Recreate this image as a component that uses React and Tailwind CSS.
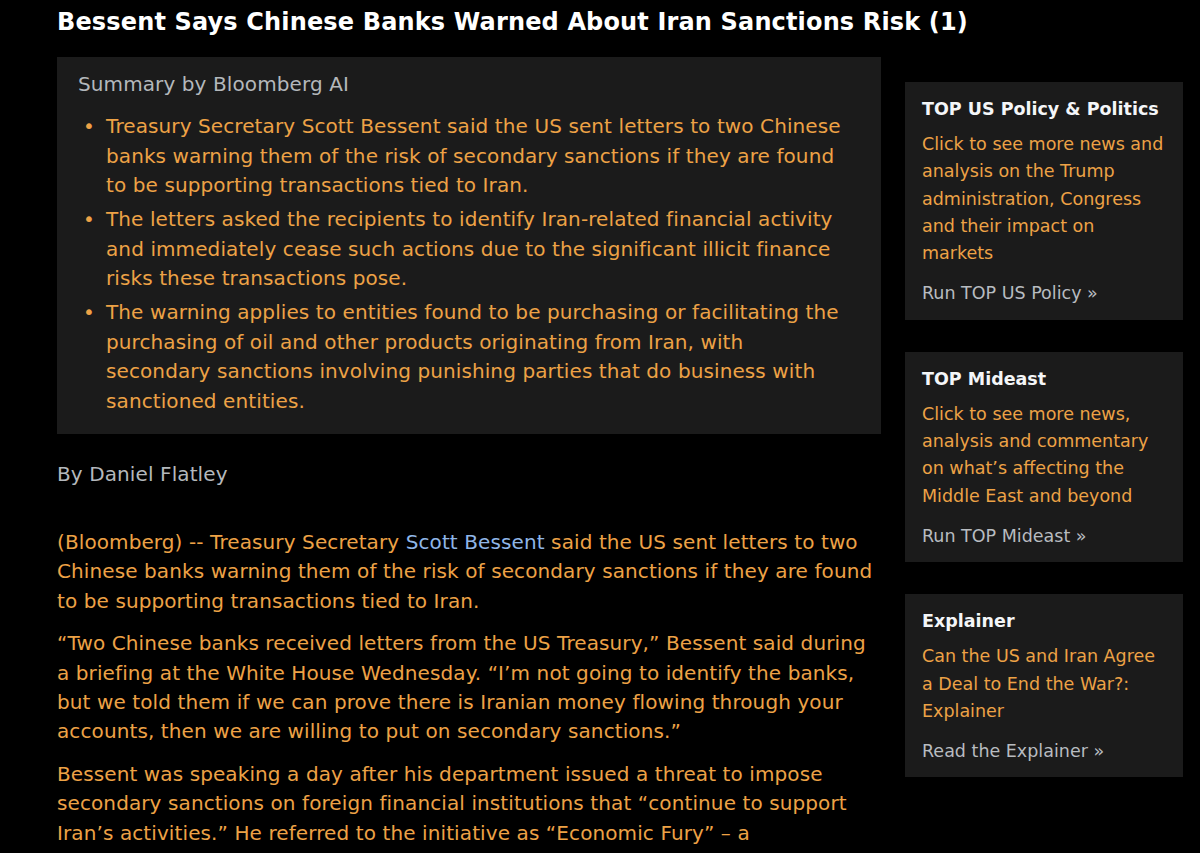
import React from 'react';

const body = "[font-family:'DejaVu_Sans','Verdana',sans-serif]";

const summary = [
  'Treasury Secretary Scott Bessent said the US sent letters to two Chinese banks warning them of the risk of secondary sanctions if they are found to be supporting transactions tied to Iran.',
  'The letters asked the recipients to identify Iran-related financial activity and immediately cease such actions due to the significant illicit finance risks these transactions pose.',
  'The warning applies to entities found to be purchasing or facilitating the purchasing of oil and other products originating from Iran, with secondary sanctions involving punishing parties that do business with sanctioned entities.',
];

const promos = [
  {
    title: 'TOP US Policy & Politics',
    text: 'Click to see more news and analysis on the Trump administration, Congress and their impact on markets',
    link: 'Run TOP US Policy »',
  },
  {
    title: 'TOP Mideast',
    text: 'Click to see more news, analysis and commentary on what’s affecting the Middle East and beyond',
    link: 'Run TOP Mideast »',
  },
  {
    title: 'Explainer',
    text: 'Can the US and Iran Agree a Deal to End the War?: Explainer',
    link: 'Read the Explainer »',
  },
];

const Promo = ({ title, text, link }) => (
  <div className="bg-[#1b1b1b] pl-[17px] pr-[14px] pt-[14px] pb-[12px]">
    <h3 className="font-bold text-[17.5px] leading-[26px] text-[#f4f6f8]">{title}</h3>
    <p className="text-[17.5px] leading-[27.3px] text-[#eda246] mt-[9px]">{text}</p>
    <p className="text-[17.5px] leading-[27.3px] text-[#b8bcc0] mt-[13px]">{link}</p>
  </div>
);

export default function App() {
  return (
    <div className={`min-h-[853px] bg-black overflow-hidden ${body}`}>
      <div className="pl-[57px] pr-[17px] pt-[4px]">
        <h1 className="font-bold text-[24px] tracking-[0.15px] leading-[36px] text-white whitespace-nowrap">
          Bessent Says Chinese Banks Warned About Iran Sanctions Risk (1)
        </h1>
        <div className="flex gap-[24px] mt-[17px]">
          <div className="w-[824px] shrink-0">
            <div className="bg-[#1b1b1b] pl-[21px] pr-[31px] pt-[12px] pb-[18px]">
              <div className="text-[20px] tracking-[0.1px] leading-[30px] text-[#b4b8bc]">Summary by Bloomberg AI</div>
              <ul className="mt-[13px] flex flex-col gap-[4.5px]">
                {summary.map((s, i) => (
                  <li key={i} className="flex text-[20px] tracking-[0.1px] leading-[29.5px] text-[#eda246]">
                    <span className="w-[28px] shrink-0 pl-[5px]">•</span>
                    <span>{s}</span>
                  </li>
                ))}
              </ul>
            </div>
            <p className="mt-[25px] text-[20px] tracking-[0.1px] leading-[30px] text-[#b4b8bc]">By Daniel Flatley</p>
            <div className="mt-[39px] w-[822px] flex flex-col gap-[13.5px] text-[20px] tracking-[0.1px] leading-[29.3px] text-[#eda246]">
              <p>
                (Bloomberg) -- Treasury Secretary <span className="text-[#8fb6e8]">Scott Bessent</span> said the US sent letters to two Chinese banks warning them of the risk of secondary sanctions if they are found to be supporting transactions tied to Iran.
              </p>
              <p>
                “Two Chinese banks received letters from the US Treasury,” Bessent said during a briefing at the White House Wednesday. “I’m not going to identify the banks, but we told them if we can prove there is Iranian money flowing through your accounts, then we are willing to put on secondary sanctions.”
              </p>
              <p>
                Bessent was speaking a day after his department issued a threat to impose secondary sanctions on foreign financial institutions that “continue to support Iran’s activities.” He referred to the initiative as “Economic Fury” – a<br />
                campaign to apply maximum financial pressure on Tehran.
              </p>
            </div>
          </div>
          <div className="w-[278px] shrink-0 mt-[25px] flex flex-col gap-[32px]">
            {promos.map((p) => (
              <Promo key={p.title} {...p} />
            ))}
          </div>
        </div>
      </div>
    </div>
  );
}
